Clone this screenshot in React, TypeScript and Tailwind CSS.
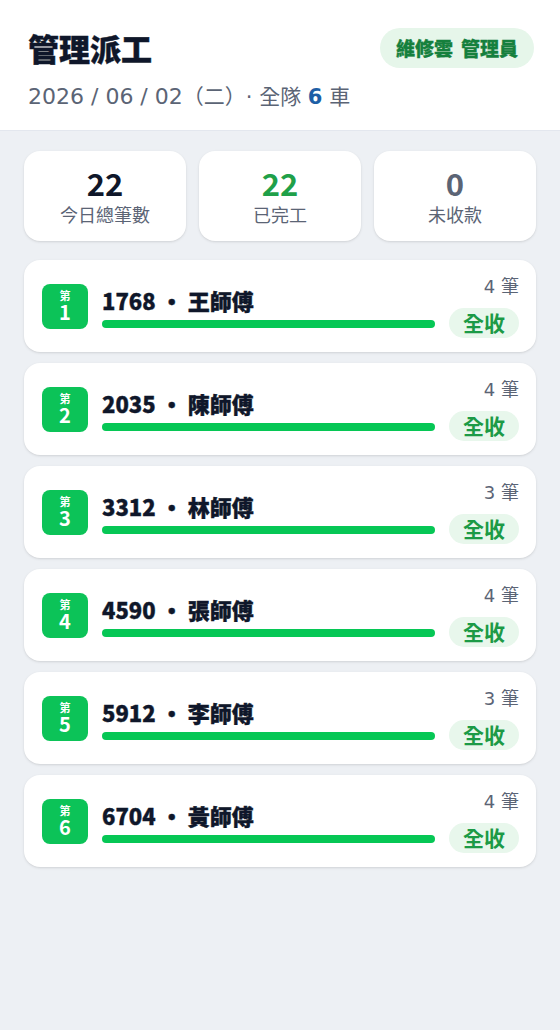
const rows = [
  { n: 1, plate: '1768', name: '王師傅', count: 4 },
  { n: 2, plate: '2035', name: '陳師傅', count: 4 },
  { n: 3, plate: '3312', name: '林師傅', count: 3 },
  { n: 4, plate: '4590', name: '張師傅', count: 4 },
  { n: 5, plate: '5912', name: '李師傅', count: 3 },
  { n: 6, plate: '6704', name: '黃師傅', count: 4 },
];

const stats = [
  { value: '22', label: '今日總筆數', color: 'text-[#0f172a]' },
  { value: '22', label: '已完工', color: 'text-[#1fa049]' },
  { value: '0', label: '未收款', color: 'text-[#5b6475]' },
];

const cjk = { fontFamily: '"Noto Sans CJK TC", sans-serif' };
const latin = { fontFamily: '"DejaVu Sans", "Noto Sans CJK TC", sans-serif' };

export default function App() {
  return (
    <div className="min-h-[1030px] bg-[#edf0f4] [text-spacing-trim:space-all]" style={cjk}>
      <header className="bg-white pl-7 pr-[26px] pt-[26px] pb-[18px] border-b border-[#e3e7ee] flex items-start justify-between">
        <div>
          <h1 className="text-[31px] leading-[44px] font-black text-[#0f172a] [-webkit-text-stroke:0.4px_#0f172a]">
            管理派工
          </h1>
          <p className="mt-[12px] text-[21px] leading-[30px] text-[#5b6475]" style={latin}>
            <span className="text-[22px]">2026 / 06 / 02</span>（二）· 全隊{' '}
            <span className="font-bold text-[#1e5fa6]">6</span> 車
          </p>
        </div>
        <span className="mt-[2px] h-10 px-[16px] rounded-full bg-[#e6f6ea] text-[#15803d] text-[19px] font-black flex items-center gap-[8px] [-webkit-text-stroke:0.3px_#15803d]">
          <span>維修雲</span>
          <span>管理員</span>
        </span>
      </header>

      <main className="px-6 pt-5 flex flex-col gap-[11px]">
        <div className="grid grid-cols-3 gap-[13px] mb-2">
          {stats.map((s) => (
            <div key={s.label} className="h-[90px] bg-white rounded-2xl shadow-sm flex flex-col items-center justify-center">
              <div className={`text-[31px] leading-[34px] font-bold ${s.color}`}>{s.value}</div>
              <div className="mt-[2px] text-[18px] leading-[24px] text-[#5b6475]">{s.label}</div>
            </div>
          ))}
        </div>

        {rows.map((r) => (
          <div key={r.n} className="h-[92px] bg-white rounded-2xl shadow-sm pl-[18px] pr-[17px] flex items-center gap-[14px]">
            <div className="w-[46px] h-[45px] rounded-lg bg-[#0cc358] text-white flex flex-col items-center justify-center font-bold">
              <span className="text-[11px] leading-[12px]">第</span>
              <span className="text-[20px] leading-[22px]">{r.n}</span>
            </div>
            <div className="flex-1 flex flex-col pt-[2px]">
              <div className="text-[22px] leading-[28px] font-black text-[#0f172a] [-webkit-text-stroke:0.4px_#0f172a]">
                {r.plate} · {r.name}
              </div>
              <div className="mt-[6px] h-2 rounded-full bg-[#06c755]" />
            </div>
            <div className="w-[70px] pt-[2px] flex flex-col items-end gap-[10px]">
              <span className="text-[18px] leading-[22px] text-[#5b6475]" style={latin}>
                {r.count} 筆
              </span>
              <span className="w-[70px] h-[30px] rounded-full bg-[#e8f7ec] text-[#1c9a46] text-[21px] font-bold flex items-center justify-center">
                全收
              </span>
            </div>
          </div>
        ))}
      </main>
    </div>
  );
}
